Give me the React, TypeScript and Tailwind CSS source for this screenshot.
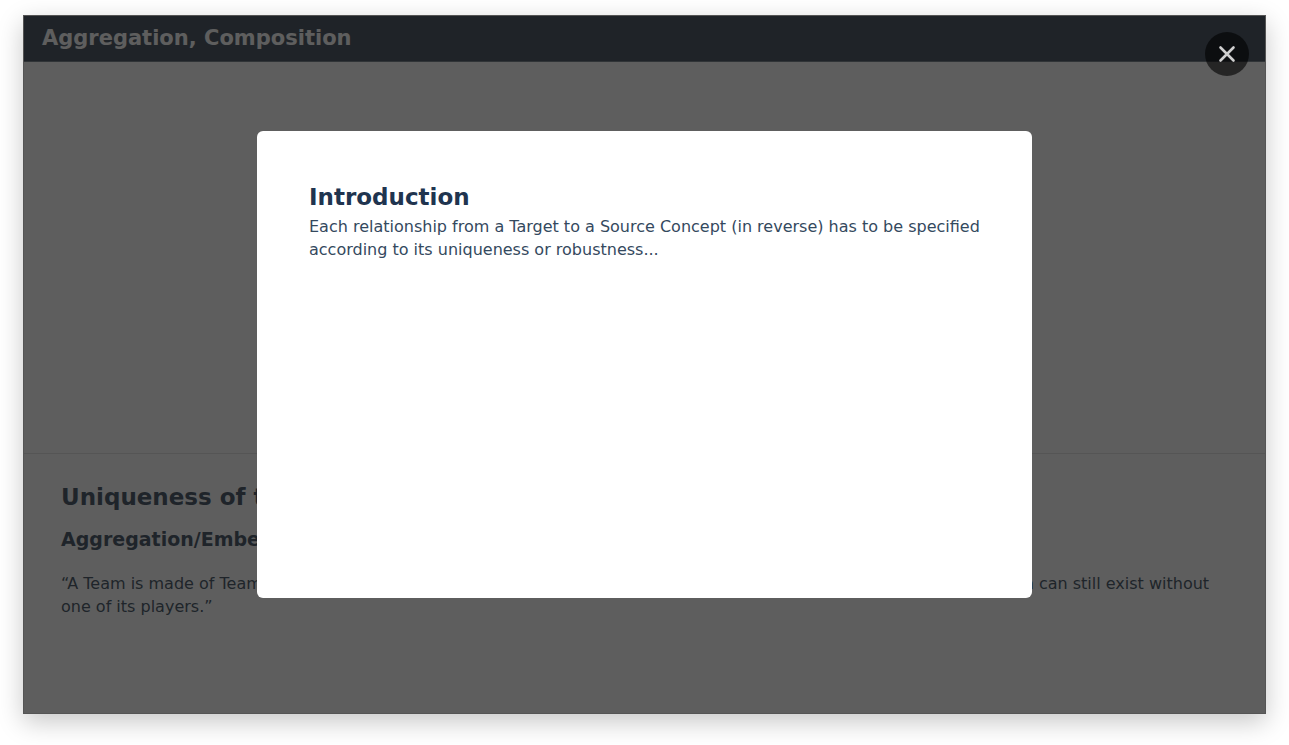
import React, { useState } from "react";

export default function App() {
  const [open, setOpen] = useState(true);

  return (
    <div className="flex min-h-screen flex-col bg-white px-[23px] pt-[15px] pb-[31px] font-['DejaVu_Sans',sans-serif] text-[#2c3e50]">
      <div className="relative flex grow flex-col border border-[#e0e0e0] bg-white shadow-[0_8px_24px_rgba(0,0,0,0.22)]">
        <header className="flex h-[46px] items-center border-b border-[#66727e] bg-[#2c3a4a] px-[18px] pb-px">
          <h1 className="text-[21px] leading-7 font-bold text-white">Aggregation, Composition</h1>
        </header>

        <main className="flex grow flex-col">
          <div className="h-[392px] border-b border-[#e0e0e0]" />
          <section className="flex flex-col px-[37px] pt-[27px]">
            <h2 className="text-[23px] leading-8 font-bold">Uniqueness of the Target</h2>
            <h3 className="mt-[14px] text-[19px] leading-6 font-bold">Aggregation/Embedding</h3>
            <p className="mt-[21px] text-[16px] leading-[23px]">
              “A Team is made of Team Players, each of whom can belong to one or two other teams as
              well. This means that the Team can still exist without one of its players.”
            </p>
          </section>
        </main>

        {open && (
          <div className="absolute -inset-px flex flex-col items-center bg-[#1a1a1a]/70 pt-[116px]">
            <article
              role="dialog"
              aria-labelledby="intro-title"
              className="min-h-[467px] w-[775px] max-w-full rounded-md bg-white pt-[50px] pr-10 pl-[52px]"
            >
              <h2 id="intro-title" className="text-[23px] leading-8 font-bold text-[#20344f]">
                Introduction
              </h2>
              <p className="mt-0.5 text-[16px] leading-[23px] text-[#34495e]">
                Each relationship from a Target to a Source Concept (in reverse) has to be specified
                according to its uniqueness or robustness...
              </p>
            </article>
            <button
              type="button"
              aria-label="Close"
              onClick={() => setOpen(false)}
              className="absolute top-[17px] right-[17px] flex size-11 items-center justify-center rounded-full bg-black/60 text-[#cfcfcf]"
            >
              <svg
                viewBox="0 0 24 24"
                className="size-6"
                fill="none"
                stroke="currentColor"
                strokeWidth="2.6"
                strokeLinecap="round"
              >
                <path d="M5.5 5.5l13 13M18.5 5.5l-13 13" />
              </svg>
            </button>
          </div>
        )}
      </div>
    </div>
  );
}
